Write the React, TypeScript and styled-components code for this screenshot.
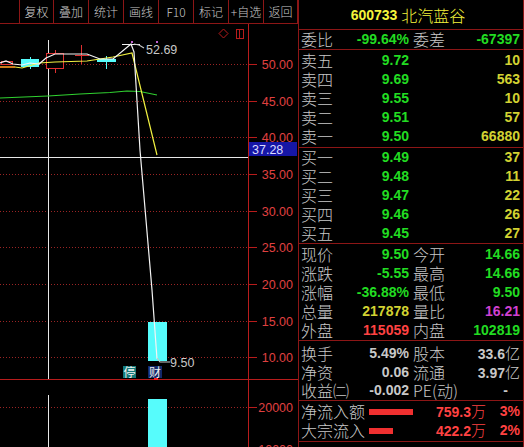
import React from 'react';
import styled, { createGlobalStyle } from 'styled-components';

const colors = {
  bg: '#000',
  line: '#8c1616',
  lineBright: '#b81c1c',
  label: '#c8c8c8',
  green: '#22dc22',
  yellow: '#d2d232',
  red: '#ff4242',
  magenta: '#d040d0',
  title: '#f4f43c',
  axis: '#e04040',
  grid: '#9a2424',
  cyan: '#56fcfc',
};

const cjk = `"Noto Sans CJK SC", "Liberation Sans", sans-serif`;
const num = `"Liberation Sans", Arial, "Noto Sans CJK SC", sans-serif`;

const GlobalStyle = createGlobalStyle`
  html, body {
    margin: 0;
    padding: 0;
    background: #000;
  }
  body {
    font-family: ${num};
  }
`;

const Screen = styled.div`
  display: flex;
  width: 524px;
  height: 447px;
  overflow: hidden;
  background: ${colors.bg};
`;

const LeftPane = styled.div`
  width: 298px;
  display: flex;
  flex-direction: column;
`;

const Toolbar = styled.div`
  display: flex;
  height: 24px;
  box-sizing: border-box;
  border-bottom: 1px solid ${colors.line};
`;

const ToolCell = styled.div<{ $w: number }>`
  width: ${p => p.$w}px;
  box-sizing: border-box;
  border-right: 1px solid ${colors.line};
  display: flex;
  align-items: center;
  justify-content: center;
  color: ${colors.label};
  font-family: ${cjk};
  font-weight: 300;
  font-size: 12px;
  line-height: 14px;
  white-space: nowrap;
`;

const Chart = styled.svg`
  display: block;
  shape-rendering: crispEdges;
`;

const AxisText = styled.text`
  font-family: ${num};
  font-size: 12.5px;
  fill: ${colors.axis};
`;

const TagText = styled.text<{ $fill?: string }>`
  font-family: ${num};
  font-size: 12.5px;
  fill: ${p => p.$fill ?? colors.label};
`;

const BadgeText = styled.text`
  font-family: ${cjk};
  font-size: 12px;
  fill: #f0f0f0;
`;

const RightPane = styled.div`
  width: 226px;
  box-sizing: border-box;
  border-left: 1px solid ${colors.line};
  border-right: 1px solid ${colors.line};
  display: flex;
  flex-direction: column;
`;

const Header = styled.div`
  height: 29px;
  border-bottom: 1px solid ${colors.line};
  display: flex;
  align-items: center;
  justify-content: center;
  gap: 4px;
  color: ${colors.title};
  padding-right: 6px;
`;

const Code = styled.span`
  font-family: ${num};
  font-weight: bold;
  font-size: 14px;
`;

const Name = styled.span`
  font-family: ${cjk};
  font-weight: 300;
  font-size: 16px;
  line-height: 18px;
`;

const Section = styled.div<{ $pt?: number; $pb?: number }>`
  padding: ${p => p.$pt ?? 0}px 0 ${p => p.$pb ?? 0}px 2px;
  border-bottom: 1px solid ${colors.line};
`;

const Row = styled.div`
  display: grid;
  grid-template-columns: 108px 107px;
  column-gap: 4px;
  height: 19px;
  align-items: center;
`;

const Half = styled.div`
  display: flex;
  justify-content: space-between;
  align-items: center;
  min-width: 0;
`;

const Label = styled.span`
  font-family: ${cjk};
  font-weight: 300;
  font-size: 16px;
  line-height: 19px;
  color: ${colors.label};
  white-space: nowrap;
`;

const Value = styled.span<{ $color: string; $pad?: number }>`
  font-family: ${num};
  font-weight: bold;
  font-size: 14px;
  line-height: 19px;
  color: ${p => p.$color};
  padding-right: ${p => p.$pad ?? 0}px;
  white-space: nowrap;
`;

const Unit = styled.span`
  font-family: ${cjk};
  font-weight: 300;
  font-size: 15px;
`;

const FlowRow = styled.div`
  display: flex;
  align-items: center;
  height: 19px;
  width: 219px;
`;

const FlowLabel = styled(Label)`
  width: 67px;
`;

const FlowBar = styled.div<{ $w: number }>`
  width: ${p => p.$w}px;
  height: 6px;
  background: #f03030;
  margin-left: 1px;
`;

const FlowAmount = styled(Value)`
  flex: 1;
  text-align: right;
`;

const FlowPct = styled(Value)`
  width: 34px;
  text-align: right;
`;

const tools: [string, number][] = [
  ['', 20],
  ['复权', 34],
  ['叠加', 35],
  ['统计', 35],
  ['画线', 35],
  ['F10', 35],
  ['标记', 35],
  ['+自选', 35],
  ['返回', 34],
];

const sells = [
  ['卖五', '9.72', '10'],
  ['卖四', '9.69', '563'],
  ['卖三', '9.55', '10'],
  ['卖二', '9.51', '57'],
  ['卖一', '9.50', '66880'],
];

const buys = [
  ['买一', '9.49', '37'],
  ['买二', '9.48', '11'],
  ['买三', '9.47', '22'],
  ['买四', '9.46', '26'],
  ['买五', '9.45', '27'],
];

type Pair = { l1: string; v1: string; c1: string; l2: string; v2: React.ReactNode; c2: string; pad2?: number };

const quotes: Pair[] = [
  { l1: '现价', v1: '9.50', c1: colors.green, l2: '今开', v2: '14.66', c2: colors.green },
  { l1: '涨跌', v1: '-5.55', c1: colors.green, l2: '最高', v2: '14.66', c2: colors.green },
  { l1: '涨幅', v1: '-36.88%', c1: colors.green, l2: '最低', v2: '9.50', c2: colors.green },
  { l1: '总量', v1: '217878', c1: colors.yellow, l2: '量比', v2: '16.21', c2: colors.magenta },
  { l1: '外盘', v1: '115059', c1: colors.red, l2: '内盘', v2: '102819', c2: colors.green },
];

const stats: Pair[] = [
  { l1: '换手', v1: '5.49%', c1: colors.label, l2: '股本', v2: <>33.6<Unit>亿</Unit></>, c2: colors.label },
  { l1: '净资', v1: '0.06', c1: colors.label, l2: '流通', v2: <>3.97<Unit>亿</Unit></>, c2: colors.label },
  { l1: '收益㈡', v1: '-0.002', c1: colors.label, l2: 'PE(动)', v2: '-', c2: colors.label, pad2: 12 },
];

const flows = [
  { label: '净流入额', bar: 44, amount: '759.3', pct: '3%' },
  { label: '大宗流入', bar: 24, amount: '422.2', pct: '2%' },
];

const priceY = (p: number) => 64 + (50 - p) * 7.33;
const levels = [50, 45, 40, 35, 30, 25, 20, 15, 10];

function PriceChart() {
  return (
    <Chart width={298} height={423} viewBox="0 24 298 423">
      {/* grid */}
      {levels.map(l => {
        const y = Math.round(priceY(l)) + 0.5;
        return (
          <g key={l}>
            <line x1={0} y1={y} x2={248} y2={y} stroke={colors.grid} strokeDasharray="1 2" />
            <line x1={249} y1={y} x2={257} y2={y} stroke={colors.lineBright} />
            <AxisText x={293} y={y + 4.5} textAnchor="end">{l.toFixed(2)}</AxisText>
          </g>
        );
      })}
      <line x1={0} y1={407.5} x2={248} y2={407.5} stroke={colors.grid} strokeDasharray="1 2" />
      <line x1={249} y1={407.5} x2={257} y2={407.5} stroke={colors.lineBright} />
      <AxisText x={293} y={412} textAnchor="end">20000</AxisText>
      <AxisText x={293} y={454} textAnchor="end">10000</AxisText>

      {/* frame */}
      <line x1={248.5} y1={24} x2={248.5} y2={447} stroke={colors.lineBright} />
      <line x1={0} y1={379.5} x2={298} y2={379.5} stroke={colors.lineBright} />

      {/* top icons */}
      <polygon points="223.5,29 228,33.5 223.5,38 219,33.5" fill="none" stroke={colors.lineBright} shapeRendering="auto" />
      <rect x={236.5} y={29.5} width={7} height={9} fill="none" stroke={colors.lineBright} />
      <line x1={239.5} y1={29.5} x2={239.5} y2={38.5} stroke={colors.lineBright} />

      {/* crosshair */}
      <line x1={48.5} y1={40} x2={48.5} y2={379} stroke="#e8e8e8" />
      <line x1={48.5} y1={395} x2={48.5} y2={447} stroke="#e8e8e8" />
      <line x1={0} y1={157.5} x2={248} y2={157.5} stroke="#e8e8e8" />
      <rect x={249} y={142} width={48} height={14} fill="#1616a6" />
      <TagText x={252} y={154} $fill="#dcdcff">37.28</TagText>

      {/* candles */}
      <rect x={1.5} y={61.5} width={11} height={3} fill="none" stroke="#e03030" />
      <line x1={30.5} y1={57} x2={30.5} y2={69} stroke={colors.cyan} />
      <rect x={21} y={59} width={18} height={8} fill={colors.cyan} />
      <line x1={55.5} y1={50} x2={55.5} y2={73} stroke="#e03030" />
      <rect x={46.5} y={53.5} width={17} height={15} fill="#000" stroke="#e03030" />
      <line x1={81.5} y1={45} x2={81.5} y2={64} stroke="#e03030" />
      <line x1={75} y1={55.5} x2={89} y2={55.5} stroke="#e03030" />
      <line x1={106.5} y1={56} x2={106.5} y2={69} stroke={colors.cyan} />
      <rect x={97} y={59} width={19} height={3} fill={colors.cyan} />
      <line x1={122} y1={44.5} x2={140} y2={44.5} stroke="#f0f0f0" />
      <rect x={148} y={322} width={19} height={39} fill={colors.cyan} />
      <rect x={148} y={399} width={19} height={48} fill={colors.cyan} />

      {/* moving averages and close line */}
      <g shapeRendering="auto" fill="none" strokeWidth={1.2}>
        <polyline points="0,98 48,96 80,94 110,92.5 127,91 140,91.5 157,95" stroke="#30d030" />
        <polyline points="0,67 15,67" stroke="#ff9a20" strokeWidth={1.6} />
        <polyline points="15,67 22,68 39,63 55,62 87,61 113,57 132,53 157,155" stroke="#f0f040" />
        <polyline points="0,63 6,61 13,64 22,65 30,63 39,64 46,58 55,54 87,54 100,59 113,59 131,44 134,52 140,150 152,290 157,359" stroke="#f4f4f4" />
        <polyline points="134,44 139,45 144,48" stroke="#c8c8c8" />
        <polyline points="157,358 160,362 170,362" stroke="#c8c8c8" />
      </g>
      <circle cx={132} cy={42} r={1.3} fill="#c060d0" />
      <circle cx={157} cy={42} r={1.3} fill="#c060d0" />

      <TagText x={146} y={54}>52.69</TagText>
      <TagText x={170} y={367}>9.50</TagText>

      {/* badges */}
      <rect x={123} y={366} width={13} height={12} fill="#127a7a" />
      <BadgeText x={123.5} y={376.5}>停</BadgeText>
      <rect x={148} y={366} width={14} height={12} fill="#12286a" />
      <BadgeText x={149} y={376.5}>财</BadgeText>
      <rect x={154} y={378} width={4} height={2} fill="#ff2020" />
    </Chart>
  );
}

function PairRow({ p }: { p: Pair }) {
  return (
    <Row>
      <Half>
        <Label>{p.l1}</Label>
        <Value $color={p.c1}>{p.v1}</Value>
      </Half>
      <Half>
        <Label>{p.l2}</Label>
        <Value $color={p.c2} $pad={p.pad2}>{p.v2}</Value>
      </Half>
    </Row>
  );
}

function BookRows({ rows }: { rows: string[][] }) {
  return (
    <>
      {rows.map(([label, price, vol]) => (
        <Row key={label}>
          <Half>
            <Label>{label}</Label>
            <Value $color={colors.green}>{price}</Value>
          </Half>
          <Half>
            <span />
            <Value $color={colors.yellow}>{vol}</Value>
          </Half>
        </Row>
      ))}
    </>
  );
}

export default function App() {
  return (
    <>
      <GlobalStyle />
      <Screen>
        <LeftPane>
          <Toolbar>
            {tools.map(([t, w], i) => (
              <ToolCell key={i} $w={w}>{t}</ToolCell>
            ))}
          </Toolbar>
          <PriceChart />
        </LeftPane>
        <RightPane>
          <Header>
            <Code>600733</Code>
            <Name>北汽蓝谷</Name>
          </Header>
          <Section>
            <Row>
              <Half>
                <Label>委比</Label>
                <Value $color={colors.green}>-99.64%</Value>
              </Half>
              <Half>
                <Label>委差</Label>
                <Value $color={colors.green}>-67397</Value>
              </Half>
            </Row>
          </Section>
          <Section $pt={1} $pb={1}>
            <BookRows rows={sells} />
          </Section>
          <Section>
            <BookRows rows={buys} />
          </Section>
          <Section $pt={1}>
            {quotes.map(q => <PairRow key={q.l1} p={q} />)}
          </Section>
          <Section $pt={2}>
            {stats.map(q => <PairRow key={q.l1} p={q} />)}
          </Section>
          <Section $pt={1} $pb={1}>
            {flows.map(f => (
              <FlowRow key={f.label}>
                <FlowLabel>{f.label}</FlowLabel>
                <FlowBar $w={f.bar} />
                <FlowAmount $color={colors.red}>{f.amount}<Unit>万</Unit></FlowAmount>
                <FlowPct $color={colors.red}>{f.pct}</FlowPct>
              </FlowRow>
            ))}
          </Section>
        </RightPane>
      </Screen>
    </>
  );
}
